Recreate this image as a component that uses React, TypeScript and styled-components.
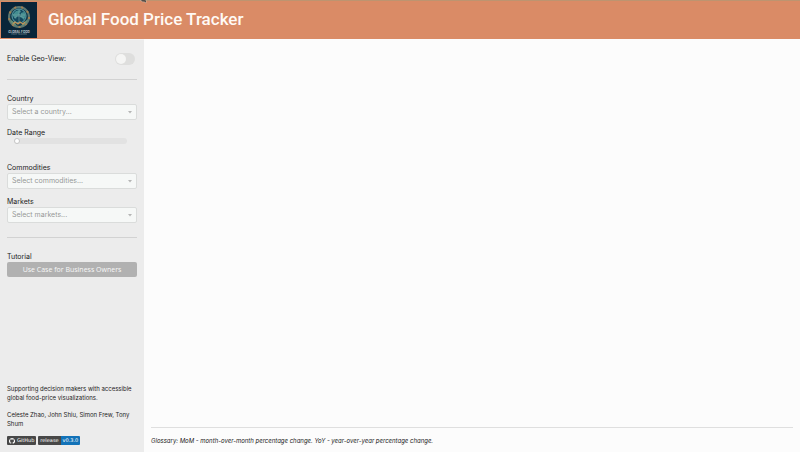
import React, { useState } from "react";
import styled, { createGlobalStyle } from "styled-components";

const GlobalStyle = createGlobalStyle`
  *, *::before, *::after { box-sizing: border-box; }
  body {
    margin: 0;
    background: #fcfcfc;
    color: #222;
    font-family: Inter, "Liberation Sans", sans-serif;
    font-size: 7px;
    line-height: 10px;
  }
  button, input, select { font: inherit; margin: 0; }
`;

const Page = styled.div`
  min-height: 100vh;
  display: flex;
  flex-direction: column;
`;

const Header = styled.header`
  position: relative;
  display: flex;
  align-items: center;
  gap: 11px;
  padding: 1px 1px;
  background: #da8b66;
  border-top: 1px solid #bd9470;
`;

const Title = styled.h1`
  margin: 0;
  padding-bottom: 2px;
  color: #fffaf5;
  font-family: Roboto, Inter, sans-serif;
  font-size: 17px;
  line-height: 24px;
  font-weight: 500;
`;

const Pointer = styled.svg`
  position: absolute;
  top: -1px;
  left: 140px;
`;

const Body = styled.div`
  flex: 1;
  display: flex;
`;

const Sidebar = styled.aside`
  flex: 0 0 18%;
  min-width: 0;
  display: flex;
  flex-direction: column;
  padding: 13px 7px 7px;
  background: #ececec;
  border-top: 1px solid #f4f4f4;
`;

const SwitchRow = styled.label`
  display: flex;
  align-items: center;
  justify-content: space-between;
  padding-right: 2px;
`;

const Switch = styled.input`
  appearance: none;
  width: 20px;
  height: 12px;
  padding: 1px;
  border-radius: 6px;
  background: #dededd;
  &::before {
    content: "";
    display: block;
    width: 10px;
    height: 10px;
    border-radius: 50%;
    background: #f5f5f4;
  }
  &:checked::before { margin-left: auto; }
`;

const Divider = styled.hr`
  width: 100%;
  margin: 14px 0;
  border: 0;
  border-top: 1px solid #d2d2d2;
`;

const Field = styled.div<{ $gap?: number }>`
  display: flex;
  flex-direction: column;
  margin-bottom: ${(p) => p.$gap ?? 0}px;
`;

const SelectBox = styled.div`
  display: grid;
  align-items: center;
  > * { grid-area: 1 / 1; }
`;

const Select = styled.select`
  appearance: none;
  width: 100%;
  height: 16px;
  padding: 0 16px 0 4px;
  border: 1px solid #dadcdb;
  border-radius: 2px;
  background: #f6f8f7;
  color: #979998;
`;

const Arrow = styled.svg`
  justify-self: end;
  margin-right: 5px;
  pointer-events: none;
`;

const Slider = styled.input`
  appearance: none;
  min-width: 0;
  height: 6px;
  margin: 0 10px 0 7px;
  border-radius: 3px;
  background: #e2e2e2;
  &::-webkit-slider-thumb {
    appearance: none;
    width: 6px;
    height: 6px;
    border: 1px solid #c5c5c5;
    border-radius: 50%;
    background: #fff;
  }
`;

const Button = styled.button`
  height: 15px;
  padding: 0;
  border: 0;
  border-radius: 2px;
  background: #b1b1b1;
  color: #f8f8f8;
  font-family: "Open Sans", "Noto Sans", sans-serif;
  font-weight: 500;
`;

const About = styled.footer`
  margin-top: auto;
  font-size: 6px;
  line-height: 9px;
`;

const Paragraph = styled.p`
  margin: 0 0 8px;
`;

const Badges = styled.div`
  display: flex;
  gap: 2px;
`;

const Badge = styled.a`
  display: flex;
  overflow: hidden;
  border-radius: 1px;
  color: #fff;
  font-family: "DejaVu Sans", sans-serif;
  font-size: 5px;
  line-height: 9px;
  text-decoration: none;
`;

const BadgePart = styled.span<{ $accent?: boolean }>`
  display: flex;
  align-items: center;
  gap: 2px;
  padding: 0 2px;
  background: ${(p) => (p.$accent ? "#1272b8" : "#484848")};
`;

const Main = styled.main`
  flex: 1;
  display: flex;
  flex-direction: column;
  justify-content: flex-end;
  padding: 7px;
`;

const Glossary = styled.p`
  margin: 0;
  padding: 8px 0 0;
  border-top: 1px solid #dfdfdf;
  font-size: 6px;
  line-height: 9px;
  font-style: italic;
`;

function Logo() {
  return (
    <svg width="36" height="36" viewBox="0 0 36 36" role="img" aria-label="Global Food">
      <rect width="36" height="36" fill="#092539" />
      <circle cx="18" cy="15" r="10" fill="#15394a" stroke="#5b7771" strokeWidth="2" />
      <circle cx="18" cy="15" r="10" fill="none" stroke="#a27f52" strokeWidth="2" strokeDasharray="2 5" />
      <circle cx="18" cy="14" r="7" fill="#13475e" stroke="#5ba3ab" />
      <path d="M12 12l3-3 4-1 1 2-2 1 1 2-3 1-1 3-3-3zM20 11l3-1 2 3-2 5-2-2-2-1z" fill="#448e91" />
      <path d="M13 16q5-4 10 0M18 7v14M12 13h12" fill="none" stroke="#79aaa9" strokeWidth=".6" />
      <path d="M9 17q1 6 7 7l-2-3zM27 17q-1 6-7 7l2-3z" fill="#679078" />
      <path d="M12 22l2-2 3 2 2-2 3 2 2-2" fill="none" stroke="#c09157" strokeWidth="1.2" />
      <text x="18" y="31" textAnchor="middle" fontSize="3" fontWeight="700" fill="#c1d0cf">GLOBAL FOOD</text>
      <text x="18" y="33" textAnchor="middle" fontSize="2" fill="#83999f">PRICE TRACKER</text>
    </svg>
  );
}

function GitHubMark() {
  return (
    <svg width="6" height="6" viewBox="0 0 16 16" fill="#fff" aria-hidden="true">
      <path d="M8 0a8 8 0 0 0-2.53 15.59c.4.07.55-.17.55-.38v-1.33c-2.23.48-2.7-1.08-2.7-1.08-.36-.92-.89-1.17-.89-1.17-.73-.5.05-.49.05-.49.81.06 1.23.83 1.23.83.72 1.23 1.88.87 2.34.67.07-.52.28-.88.51-1.08-1.78-.2-3.65-.89-3.65-3.96 0-.87.31-1.59.83-2.15-.08-.2-.36-1.02.08-2.12 0 0 .67-.22 2.2.82a7.7 7.7 0 0 1 4 0c1.53-1.04 2.2-.82 2.2-.82.44 1.1.16 1.92.08 2.12.52.56.82 1.28.82 2.15 0 3.08-1.87 3.76-3.66 3.95.29.25.54.74.54 1.49v2.17c0 .21.15.46.55.38A8 8 0 0 0 8 0z" />
    </svg>
  );
}

type DropdownProps = { id: string; label: string; placeholder: string; gap?: number };

function Dropdown({ id, label, placeholder, gap }: DropdownProps) {
  return (
    <Field $gap={gap}>
      <label htmlFor={id}>{label}</label>
      <SelectBox>
        <Select id={id} defaultValue="">
          <option value="">{placeholder}</option>
        </Select>
        <Arrow width="4" height="3" viewBox="0 0 4 3" aria-hidden="true">
          <path d="M0 0h4L2 2.5z" fill="#b5b5b5" />
        </Arrow>
      </SelectBox>
    </Field>
  );
}

export default function App() {
  const [geoView, setGeoView] = useState(false);
  const [start, setStart] = useState(0);

  return (
    <Page>
      <GlobalStyle />
      <Header>
        <Logo />
        <Title>Global Food Price Tracker</Title>
        <Pointer width="7" height="4" viewBox="0 0 7 4" aria-hidden="true">
          <path d="M0 0h6v3L4 1.5 3 2z" fill="#292522" stroke="#ddd0c3" strokeWidth=".5" />
        </Pointer>
      </Header>
      <Body>
        <Sidebar>
          <SwitchRow>
            Enable Geo-View:
            <Switch
              type="checkbox"
              role="switch"
              checked={geoView}
              onChange={(e) => setGeoView(e.target.checked)}
            />
          </SwitchRow>
          <Divider />
          <Dropdown id="country" label="Country" placeholder="Select a country..." gap={8} />
          <Field $gap={19}>
            <label htmlFor="dates">Date Range</label>
            <Slider
              id="dates"
              type="range"
              min={0}
              max={100}
              value={start}
              onChange={(e) => setStart(Number(e.target.value))}
            />
          </Field>
          <Dropdown id="commodities" label="Commodities" placeholder="Select commodities..." gap={8} />
          <Dropdown id="markets" label="Markets" placeholder="Select markets..." />
          <Divider />
          <Field>
            <span>Tutorial</span>
            <Button type="button">Use Case for Business Owners</Button>
          </Field>
          <About>
            <Paragraph>Supporting decision makers with accessible global food-price visualizations.</Paragraph>
            <Paragraph>Celeste Zhao, John Shiu, Simon Frew, Tony Shum</Paragraph>
            <Badges>
              <Badge href="#github">
                <BadgePart>
                  <GitHubMark />
                  GitHub
                </BadgePart>
              </Badge>
              <Badge href="#release">
                <BadgePart>release</BadgePart>
                <BadgePart $accent>v0.3.0</BadgePart>
              </Badge>
            </Badges>
          </About>
        </Sidebar>
        <Main>
          <Glossary>
            Glossary: MoM - month-over-month percentage change. YoY - year-over-year percentage change.
          </Glossary>
        </Main>
      </Body>
    </Page>
  );
}
